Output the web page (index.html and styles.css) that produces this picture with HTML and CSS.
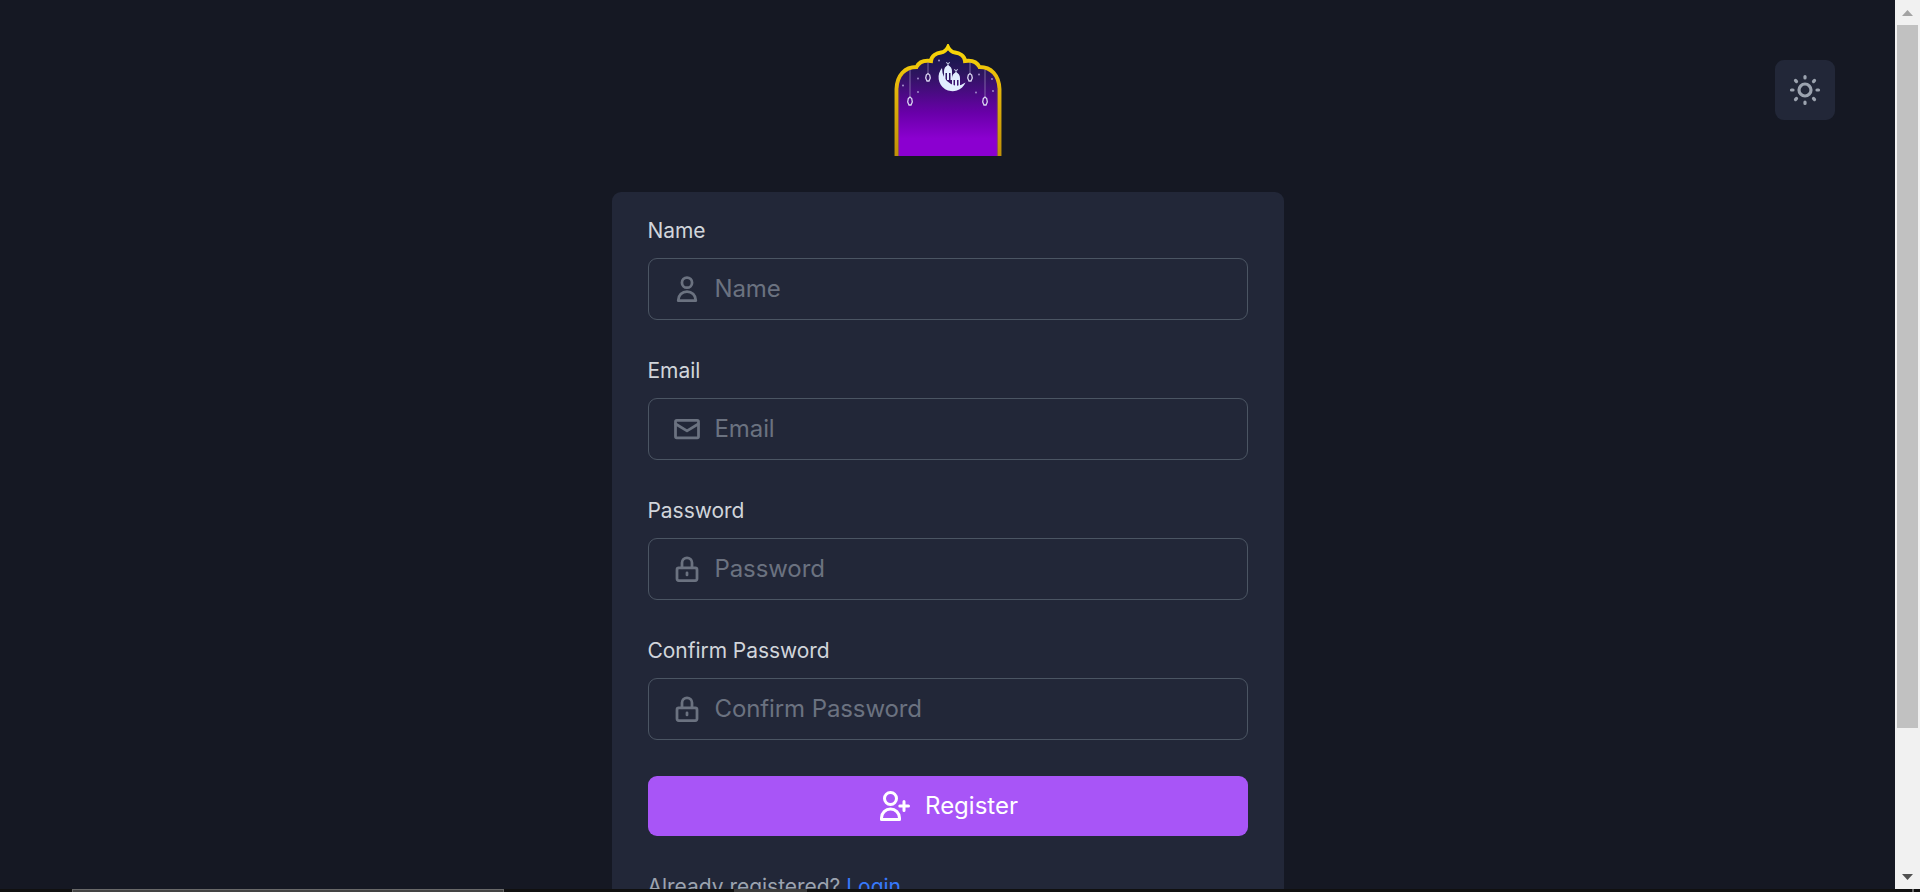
FILE: index.html
```html
<!DOCTYPE html>
<html lang="en">
<head>
<meta charset="utf-8">
<title>Register</title>
<link rel="stylesheet" href="styles.css">
</head>
<body>
<div class="window">
<div class="view">
<main class="page">
<svg class="logo" viewBox="0 0 108 112">
<defs>
<linearGradient id="night" x1="0" y1="0" x2="0" y2="1"><stop offset="0" stop-color="#0d1744"/><stop offset=".25" stop-color="#2e1560"/><stop offset=".6" stop-color="#6800a8"/><stop offset=".84" stop-color="#8b00d0"/><stop offset="1" stop-color="#8b00d0"/></linearGradient>
<linearGradient id="gold" x1="0" y1="0" x2="0" y2="1"><stop offset="0" stop-color="#f8d808"/><stop offset=".3" stop-color="#e8ba0b"/><stop offset="1" stop-color="#c09008"/></linearGradient>
</defs>
<path d="M2.500 112V45C3 31 11 23 22.500 23C25 18 30 16 37 17C37.500 11.500 43 9 47 8.500C51 8 53 5 54 3C55 5 57 8 61 8.500C65 9 70.500 11.500 71 17C78 16 83 18 85.500 23C97 23 105 31 105.500 45V112" fill="url(#night)" stroke="url(#gold)" stroke-width="3.900"/>
<path d="M4.700 112V44M103.300 112V44" stroke="#805a45" stroke-width="1" opacity=".6"/>
<path d="M16 26V53M34 18V29M76 18V29M91 26V53" stroke="#9c8ab9" stroke-width=".7"/>
<path fill="none" stroke="#d8d4f0" stroke-width="1.300" d="M14.300 54.500L16 53L17.700 54.500L18.300 58L17 61H15L13.700 58ZM32.300 31L34 29.500L35.700 31L36.300 34L35 37H33L31.700 34ZM74.300 31L76 29.500L77.700 31L78.300 34L77 37H75L73.700 34ZM89.300 54.500L91 53L92.700 54.500L93.300 58L92 61H90L88.700 58Z"/>
<path d="M48 24A14 14 0 1 0 71.500 38.500Q64 44 57 40Q48 35 48 24Z" fill="#e2edff"/>
<path d="M50 27Q50 23 54 21Q58 23 58 27V36H56.500V29H55V36H53V29H51.500V36H50ZM58 34Q58 30 62 28Q66 30 66 34V42H64.500V36H63V42H61V36H59.500V42H58Z" fill="#e2edff"/>
<path d="M52 18.500Q54 20.500 56 18.500M60 25.500Q62 27.500 64 25.500M54 19V22M62 26V29" fill="none" stroke="#e2edff" stroke-width=".8"/>
<g fill="#a795ce"><circle cx="45" cy="16.500" r="1"/><circle cx="9" cy="41.500" r="1"/><circle cx="24" cy="34.500" r=".9"/><circle cx="24" cy="48" r=".9"/><circle cx="85" cy="30.500" r=".9"/><circle cx="98" cy="35" r=".9"/><circle cx="99" cy="47" r=".9"/><circle cx="82" cy="48.500" r=".9"/></g>
</svg>
<form class="card">
<div class="field"><label class="label" for="name">Name</label><div class="control">
<svg class="icon" viewBox="0 0 24 24"><circle cx="12" cy="6.900" r="4.050"/><path d="M5 21.300V21A7 7 0 0 1 19 21V21.300Z"/></svg>
<input class="input" id="name" type="text" placeholder="Name"></div></div>
<div class="field"><label class="label" for="email">Email</label><div class="control">
<svg class="icon" viewBox="0 0 24 24"><rect x="2.800" y="5" width="18.400" height="14" rx="1"/><path d="M3 8L12 13.500L21 8"/></svg>
<input class="input" id="email" type="email" placeholder="Email"></div></div>
<div class="field"><label class="label" for="password">Password</label><div class="control">
<svg class="icon" viewBox="0 0 24 24"><rect x="4" y="11.100" width="16" height="10.100" rx="1.400"/><path d="M8 11V7A4 4 0 0 1 16 7V11M12 15V16.700"/></svg>
<input class="input" id="password" type="password" placeholder="Password"></div></div>
<div class="field"><label class="label" for="confirm">Confirm Password</label><div class="control">
<svg class="icon" viewBox="0 0 24 24"><rect x="4" y="11.100" width="16" height="10.100" rx="1.400"/><path d="M8 11V7A4 4 0 0 1 16 7V11M12 15V16.700"/></svg>
<input class="input" id="confirm" type="password" placeholder="Confirm Password"></div></div>
<button class="submit" type="button"><svg class="submit-icon" viewBox="0 0 36 36"><circle cx="13.500" cy="10.500" r="6"/><path d="M4.500 31.500V30A9 9 0 0 1 22.500 30V31.500ZM22.800 18H31.500M27 13.600V22.400"/></svg><span>Register</span></button>
<p class="signin">Already registered? <a class="link" href="#">Login</a></p>
</form>
</main>
<button class="theme" type="button" aria-label="Toggle theme"><svg class="sun" viewBox="0 0 36 36"><circle cx="18" cy="18" r="6"/><path d="M18 4.500V6M18 30V31.500M4.500 18H6M30 18H31.500M8.500 8.500L9.500 9.500M26.500 26.500L27.500 27.500M8.500 27.500L9.500 26.500M26.500 9.500L27.500 8.500"/></svg></button>
<div class="scrollbar"><span class="arrow up"></span><span class="thumb"></span><span class="arrow down"></span></div>
</div>
<div class="taskbar"><span class="task-wide"></span><span class="task"></span><span class="task-edge"></span></div>
</div>
</body>
</html>
```
FILE: styles.css
```css
* { box-sizing: border-box; }
body { margin: 0; background: #151823; font-family: Inter, sans-serif; }
.window { height: 892px; display: flex; flex-direction: column; overflow: hidden; }
.view { height: 889px; display: flex; position: relative; overflow: hidden; }
.page { flex: 1; display: flex; flex-direction: column; align-items: center; padding-top: 44px; }
.logo { width: 108px; height: 112px; flex: none; margin-bottom: 36px; }
.card { width: 672px; height: 760px; flex: none; padding: 24px 36px; background: #222738; border-radius: 9px; }
.field { height: 140px; }
.label { display: block; height: 42px; font-size: 21px; line-height: 30px; letter-spacing: -0.05px; color: #d1d5db; }
.control { height: 62px; display: flex; align-items: center; border: 1px solid #4b5563; border-radius: 9px; padding-left: 23px; }
.icon { width: 30px; height: 30px; fill: none; stroke: #6b7280; stroke-width: 2.2; stroke-linecap: round; stroke-linejoin: round; }
.input { flex: 1; min-width: 0; margin-left: 13px; padding: 0; border: 0; outline: 0; background: transparent; color: #d1d5db; font: 24px/36px Inter, sans-serif; letter-spacing: -0.1px; }
.input::placeholder { color: #6b7280; opacity: 1; }
.submit { width: 100%; height: 60px; display: flex; justify-content: center; align-items: center; gap: 12px; border: 0; border-radius: 9px; padding: 0; background: #a855f7; color: #fff; font: 24px/36px Inter, sans-serif; }
.submit-icon { width: 36px; height: 36px; fill: none; stroke: #fff; stroke-width: 3; stroke-linejoin: round; stroke-linecap: round; }
.signin { margin: 36px 0 0; color: #9ca3af; font-size: 21px; line-height: 30px; letter-spacing: -0.02px; }
.link { color: #3779fb; text-decoration: none; }
.theme { position: absolute; top: 60px; right: 85px; width: 60px; height: 60px; display: grid; place-items: center; padding: 0; border: 0; border-radius: 9px; background: #222738; }
.sun { width: 36px; height: 36px; fill: none; stroke: #9ca3af; stroke-width: 3.2; stroke-linecap: round; }
.scrollbar { width: 25px; height: 889px; display: flex; flex-direction: column; align-items: center; background: #f1f1f1; padding-top: 10px; }
.arrow { width: 11px; height: 6px; }
.up { background: #a3a3a3; clip-path: polygon(50% 0, 100% 100%, 0 100%); }
.down { background: #505050; clip-path: polygon(0 0, 100% 0, 50% 100%); margin-top: 146px; }
.thumb { width: 21px; height: 703px; margin-top: 9px; background: #c1c1c1; }
.taskbar { height: 3px; background: #101010; display: flex; }
.task-wide { width: 432px; margin-left: 72px; background: #444; border: 1px solid #686868; border-bottom: 0; }
.task { width: 73px; margin-left: 230px; background: #3b3b3b; }
.task-edge { width: 2px; margin-left: 1105px; background: #686868; }
```
